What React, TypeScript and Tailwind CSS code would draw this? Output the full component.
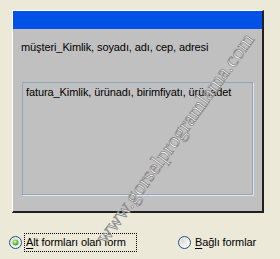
const Radio = ({ checked }: { checked: boolean }) => {
  return (
    <svg width="13" height="13" viewBox="0 0 13 13" className="shrink-0">
      <defs>
        <radialGradient id={checked ? "rg1" : "rg2"} cx="0.35" cy="0.35" r="0.8">
          <stop offset="0" stopColor="#dcdcd7" />
          <stop offset="1" stopColor="#ffffff" />
        </radialGradient>
        <radialGradient id="dot" cx="0.4" cy="0.35" r="0.7">
          <stop offset="0" stopColor="#d7f5a0" />
          <stop offset="1" stopColor="#21a121" />
        </radialGradient>
      </defs>
      <circle cx="6.5" cy="6.5" r="6" fill={`url(#${checked ? "rg1" : "rg2"})`} stroke="#1c5180" strokeWidth="1" />
      {checked && <circle cx="6.5" cy="6.5" r="3" fill="url(#dot)" />}
    </svg>
  );
};

export default function App() {
  return (
    <div
      className="relative w-[280px] h-[259px] overflow-hidden bg-[#ece9d8] pt-[10px] text-[11px] tracking-[-0.1px] text-black"
      style={{ fontFamily: '"Liberation Sans", Arial, sans-serif' }}
    >
      <div className="ml-[12px] w-[252px] h-[203px] bg-[#c0c0c0] border-t border-l border-t-white border-l-white border-r-2 border-b-2 border-r-[#202020] border-b-[#202020] flex flex-col">
        <div className="h-[18px] bg-[#0052e6]" />
        <div className="pl-[8px] pt-[12px] leading-[13px] whitespace-nowrap">
          müşteri_Kimlik, soyadı, adı, cep, adresi
        </div>
        <div className="ml-[9px] mt-[28px] w-[231px] h-[113px] border border-[#8fa6c3] shadow-[1px_1px_0_#e4e4e4] pl-[3px] pt-[3px] leading-[13px] whitespace-nowrap">
          fatura_Kimlik, ürünadı, birimfiyatı, ürünadet
        </div>
      </div>

      <div className="flex items-center mt-[20px] pl-[9px]">
        <Radio checked={true} />
        <div className="ml-[2px] px-[1px] h-[19px] w-[113px] flex items-center whitespace-nowrap border border-dotted border-black leading-[13px]">
          <span className="underline underline-offset-2">A</span>lt formları olan form
        </div>
        <div className="ml-[41px] flex items-center">
          <Radio checked={false} />
          <span className="ml-[4px] leading-[13px] whitespace-nowrap">
            <span className="underline underline-offset-2">B</span>ağlı formlar
          </span>
        </div>
      </div>

      <div
        className="absolute left-[45px] top-[128px] w-[260px] text-center text-[21px] tracking-normal leading-none text-white pointer-events-none [-webkit-text-stroke:0.8px_#8a8a8a] -rotate-[54deg] origin-center whitespace-nowrap"
        style={{ fontFamily: '"Liberation Serif", "Times New Roman", serif' }}
      >
        www.gorselprogramlama.com
      </div>
    </div>
  );
}
